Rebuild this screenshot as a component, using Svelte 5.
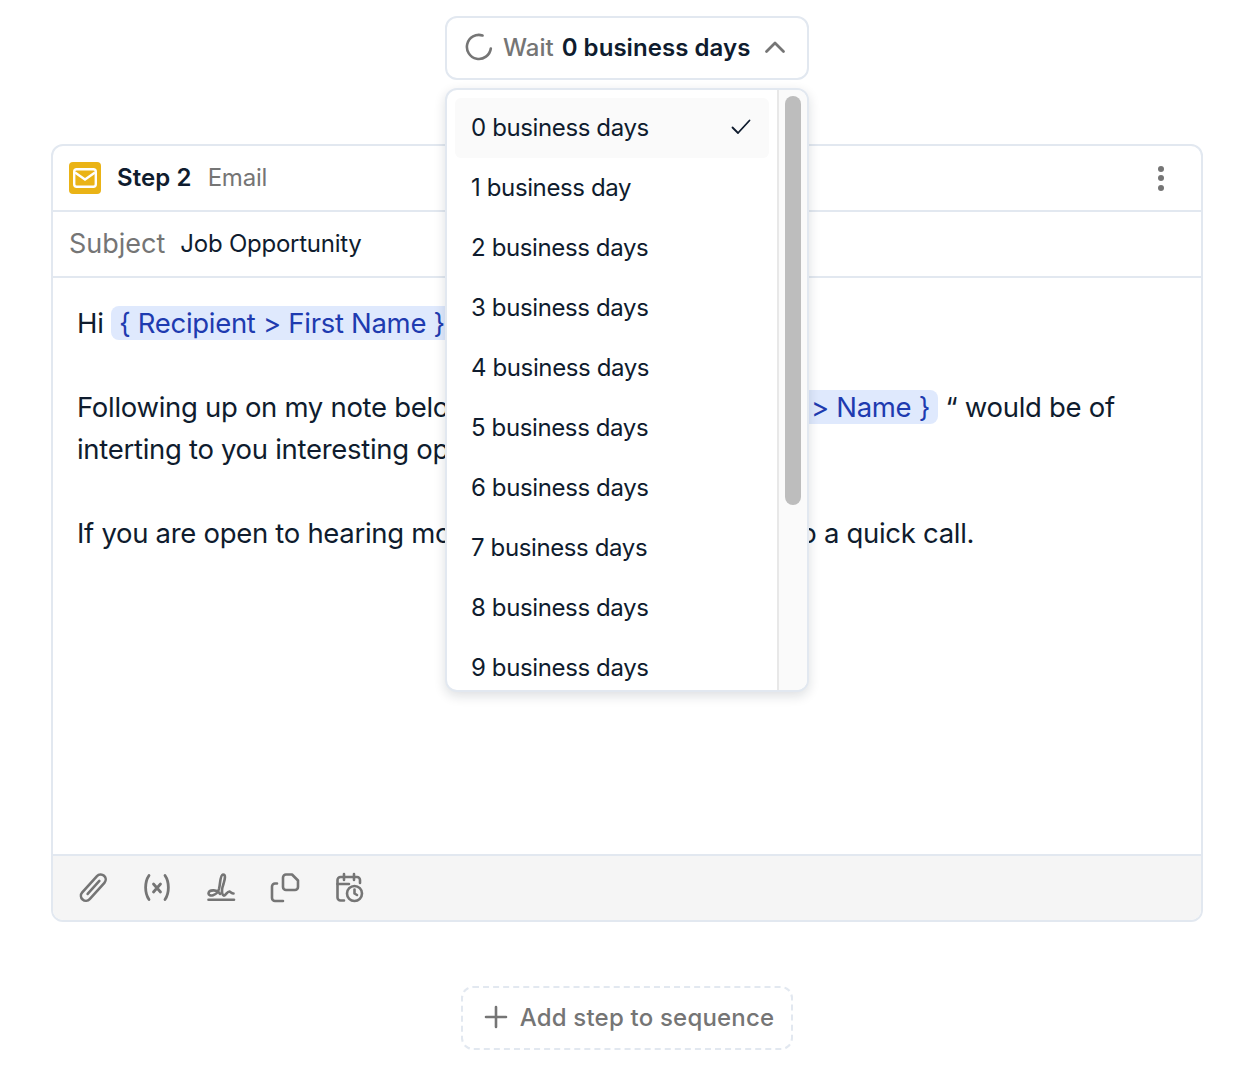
<script>
  const days = ['0 business days','1 business day','2 business days','3 business days','4 business days','5 business days','6 business days','7 business days','8 business days','9 business days'];
</script>

<div class="page">
  <button class="wait">
    <svg class="spin" width="28" height="28" viewBox="0 0 28 28" fill="none"><path d="M25.8 15.500A12 12 0 1 1 17.500 2.500" stroke="#757575" stroke-width="2.600" stroke-linecap="round"/></svg>
    <span class="muted">Wait</span>
    <strong>0 business days</strong>
    <svg class="chev" width="24" height="24" viewBox="0 0 24 24" fill="none"><path d="M3.500 16.500l8.500-8.500 8.500 8.500" stroke="#757575" stroke-width="2.800" stroke-linecap="round" stroke-linejoin="round"/></svg>
  </button>

  <div class="menu">
    <ul class="list">
      {#each days as d, i}
        <li class:active={i === 0}>
          <span>{d}</span>
          {#if i === 0}
            <svg width="24" height="24" viewBox="0 0 24 24" fill="none"><path d="M3.500 12.500l5.500 5.500L20.500 5.500" stroke="#0f1c2e" stroke-width="1.800" stroke-linecap="round" stroke-linejoin="round"/></svg>
          {/if}
        </li>
      {/each}
    </ul>
    <div class="track"><div class="thumb"></div></div>
  </div>

  <section class="card">
    <header class="head">
      <span class="badge">
        <svg width="24" height="20" viewBox="0 0 24 20" fill="none"><rect x="1.200" y="1.200" width="21.600" height="17.600" rx="2.500" stroke="#fff" stroke-width="2.400"/><path d="M2 4.500l10 7 10-7" stroke="#fff" stroke-width="2.400"/></svg>
      </span>
      <strong class="step">Step 2</strong>
      <span class="muted type">Email</span>
      <span class="more"><i></i><i></i><i></i></span>
    </header>
    <div class="subject">
      <span class="label">Subject</span>
      <span class="value">Job Opportunity</span>
    </div>
    <div class="body">
      <p>Hi <span class="chip">{'{'} Recipient &gt; First Name {'}'}</span></p>
      <p>Following up on my note below, I wondered if “ <span class="chip">{'{'} Contact &gt; Name {'}'}</span> “ would be of interting to you interesting opportunities.</p>
      <p>If you are open to hearing more, I would love to jump on to a quick call.</p>
    </div>
    <footer class="foot">
      <svg width="32" height="32" viewBox="0 0 32 32" fill="none" stroke="#757575" stroke-width="2.600" stroke-linecap="round" stroke-linejoin="round"><g transform="rotate(42 16 16)"><rect x="11" y="-0.500" width="10" height="32" rx="5"/><path d="M16 6.500V24"/></g></svg>
      <svg width="32" height="32" viewBox="0 0 32 32" fill="none" stroke="#757575" stroke-width="2.800" stroke-linecap="round" stroke-linejoin="round"><path d="M8 3.500C3.500 10 3.500 21 8 27.500M24 3.500c4.500 6.500 4.500 17.500 0 24M12.500 12l7 8M19.500 12l-7 8"/></svg>
      <svg width="32" height="32" viewBox="0 0 32 32" fill="none" stroke="#757575" stroke-width="2.600" stroke-linecap="round" stroke-linejoin="round"><path d="M3.500 27.700H29"/><path d="M15 22C13 17.500 4 17 3.500 21.500 3.500 25 12 24 14 17 15.500 11 15 3 18 2.500 21 2.500 20 7 18.500 12 17 16 16 20 18 23 20 25.500 22 19 24.500 19.500 26 20 26.500 21.500 28.500 21.500"/></svg>
      <svg width="32" height="32" viewBox="0 0 32 32" fill="none" stroke="#757575" stroke-width="2.600" stroke-linecap="round" stroke-linejoin="round"><path d="M17 2.500h6l6 6v6.500a3 3 0 0 1-3 3h-9a3 3 0 0 1-3-3v-9.500a3 3 0 0 1 3-3z"/><path d="M8 11.500H6a3 3 0 0 0-3 3V26a3 3 0 0 0 3 3h8"/></svg>
      <svg width="32" height="32" viewBox="0 0 32 32" fill="none" stroke="#757575" stroke-width="2.600" stroke-linecap="round" stroke-linejoin="round"><path d="M11 28.500H7.500a3 3 0 0 1-3-3V8a3 3 0 0 1 3-3h16.500a3 3 0 0 1 3 3v3"/><path d="M4.500 12h11.500M11 2v6M21 2v6"/><circle cx="21.500" cy="21.500" r="7.500"/><path d="M21.500 17.500v4l2.500 1.500"/></svg>
    </footer>
  </section>

  <button class="add">
    <svg width="24" height="24" viewBox="0 0 24 24" fill="none"><path d="M12 2v20M2 12h20" stroke="#757575" stroke-width="2.600" stroke-linecap="round"/></svg>
    Add step to sequence
  </button>
</div>

<style>
  :global(body) { margin: 0; background: #fff; }
  .page {
    position: relative;
    width: 1246px;
    height: 1074px;
    box-sizing: border-box;
    padding: 16px 43px 0 51px;
    display: flex;
    flex-direction: column;
    align-items: center;
    font-family: Inter, "Liberation Sans", sans-serif;
    color: #0f1c2e;
    overflow: hidden;
  }
  button { font: inherit; background: #fff; cursor: pointer; }
  .muted { color: #757575; }
  .wait {
    flex: none;
    width: 364px;
    height: 64px;
    box-sizing: border-box;
    border: 2px solid #e2e8f0;
    border-radius: 12px;
    display: flex;
    align-items: center;
    padding: 0 20px 2px 18px;
    font-size: 24px;
    font-weight: 500;
    color: #0f1c2e;
  }
  .wait .spin { margin-right: 10px; }
  .wait strong { font-weight: 600; margin-left: 8px; letter-spacing: 0.05px; }
  .wait .chev { margin-left: auto; }
  .menu {
    position: absolute;
    left: 445px;
    top: 88px;
    width: 364px;
    height: 604px;
    box-sizing: border-box;
    border: 2px solid #e2e8f0;
    border-radius: 12px;
    background: #fff;
    box-shadow: 0 4px 12px rgba(15, 28, 46, 0.14);
    display: flex;
    overflow: hidden;
    z-index: 2;
  }
  .list {
    list-style: none;
    margin: 0;
    padding: 8px;
    flex: 1;
    min-width: 0;
    overflow: hidden;
  }
  .list li {
    height: 60px;
    box-sizing: border-box;
    display: flex;
    align-items: center;
    justify-content: space-between;
    padding: 0 16px 2px;
    font-size: 24px;
    letter-spacing: -0.38px;
    border-radius: 6px;
  }
  .list li.active { background: #fafafa; }
  .track {
    flex: none;
    width: 30px;
    box-sizing: border-box;
    border-left: 2px solid #e8e8e8;
    background: #fafafa;
    padding: 6px 6px 0;
  }
  .thumb { height: 409px; width: 16px; border-radius: 8px; background: #bdbdbd; }
  .card {
    flex: none;
    margin-top: 64px;
    width: 1152px;
    height: 778px;
    box-sizing: border-box;
    border: 2px solid #e2e8f0;
    border-radius: 12px;
    display: flex;
    flex-direction: column;
    overflow: hidden;
  }
  .head {
    height: 66px;
    flex: none;
    box-sizing: border-box;
    display: flex;
    align-items: center;
    padding: 0 16px 2px;
    border-bottom: 2px solid #e2e8f0;
    font-size: 24px;
  }
  .badge {
    width: 32px;
    height: 32px;
    border-radius: 4px;
    background: #eab316;
    display: flex;
    align-items: center;
    justify-content: center;
    margin-right: 16px;
    position: relative;
    top: 1px;
  }
  .step { font-weight: 600; margin-right: 16px; letter-spacing: 0.1px; }
  .type { letter-spacing: -0.2px; }
  .more { margin-left: auto; margin-right: 21px; display: flex; flex-direction: column; gap: 3.500px; position: relative; top: 1px; }
  .more i { width: 6px; height: 6px; border-radius: 50%; background: #757575; }
  .subject {
    height: 66px;
    flex: none;
    box-sizing: border-box;
    display: flex;
    align-items: center;
    padding: 0 16px 2px;
    border-bottom: 2px solid #e2e8f0;
  }
  .label { font-size: 27px; color: #757575; margin-right: 15px; }
  .value { font-size: 24px; letter-spacing: -0.25px; }
  .body {
    flex: 1;
    padding: 24px 24px 0;
    font-size: 27.500px;
    letter-spacing: -0.3px;
    line-height: 42px;
  }
  .body p { margin: 0 0 42px; }
  .chip {
    background: #dfe9fd;
    color: #1e3bb0;
    border-radius: 8px;
    padding: 0 8px;
  }
  .foot {
    height: 66px;
    flex: none;
    box-sizing: border-box;
    background: #f5f5f5;
    border-top: 2px solid #e2e8f0;
    display: flex;
    align-items: center;
    gap: 32px;
    padding: 0 24px;
  }
  .add {
    flex: none;
    margin-top: 64px;
    width: 332px;
    height: 64px;
    box-sizing: border-box;
    border: 2px dashed #e2e8f0;
    border-radius: 12px;
    display: flex;
    align-items: center;
    justify-content: center;
    gap: 12px;
    padding: 0 0 2px 4px;
    font-size: 24px;
    font-weight: 500;
    letter-spacing: 0.2px;
    color: #757575;
  }
</style>
